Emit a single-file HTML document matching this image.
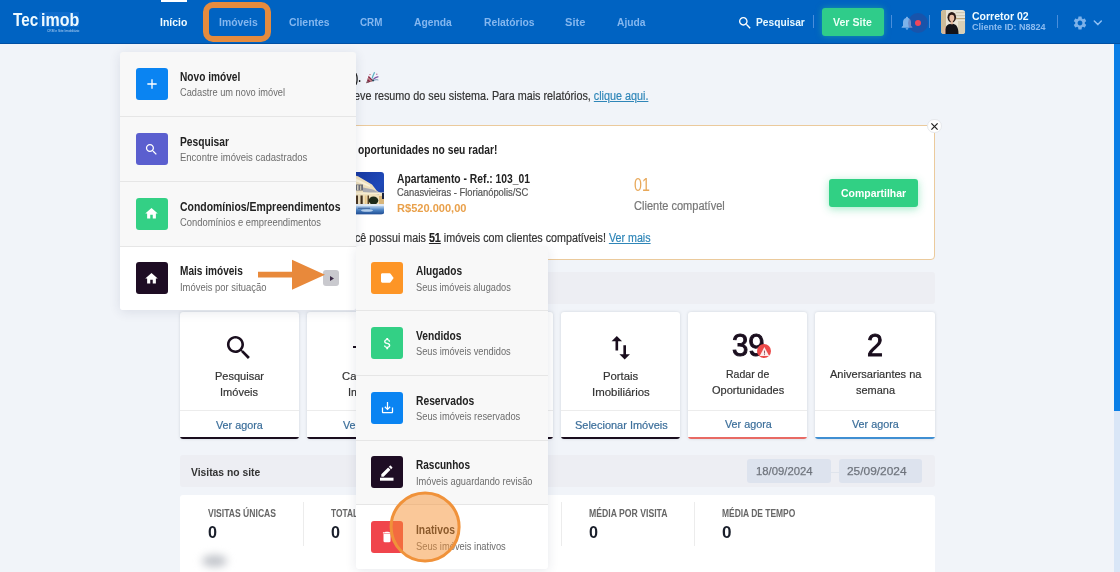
<!DOCTYPE html>
<html lang="pt-BR"><head><meta charset="utf-8"><title>Tecimob</title>
<style>
*{box-sizing:border-box;margin:0;padding:0}
html,body{width:1120px;height:572px;overflow:hidden}
body{background:#f1f4f9;font-family:"Liberation Sans",sans-serif;position:relative}
.abs,.t,.box{position:absolute}
.t{white-space:nowrap;line-height:1;transform-origin:0 0;display:block}
.layer{position:absolute;left:0;top:0;width:1120px;height:572px;pointer-events:none}
svg{position:absolute;display:block;overflow:visible}
/* nav */
#nav{left:0;top:0;width:1120px;height:44px;background:#0063c2;box-shadow:inset 0 -1px 0 rgba(0,35,95,.3)}
.vsep{width:1px;height:13px;top:15px;background:#4a8edb}
/* cards */
.card{background:#fff;border-radius:3px;top:312px;height:126.5px;width:119.5px;box-shadow:0 0 3px rgba(50,55,70,.17);overflow:hidden}
.card i{position:absolute;left:0;right:0;top:97.6px;height:1px;background:#ececec}
.card b{position:absolute;left:0;right:0;bottom:0;height:1.8px;background:#1a0e1e}
.bar{background:#edeef3;border-radius:3px}
/* menus */
.mi{position:absolute;left:0;width:100%;height:64.5px;border-top:1px solid #e6e6e6}
.ic{position:absolute;width:32px;height:32px;border-radius:3px}
.bm{display:inline-block;width:0;height:0;vertical-align:baseline}

.rw{-webkit-text-stroke:.22px}

</style></head>
<body>
<!-- ================= BASE PAGE ================= -->
<div class="layer" id="L-base">
  <!-- radar card -->
  <div class="box" style="left:180px;top:125px;width:755px;height:134.6px;background:#fff;border:1px solid #ebca9c;border-radius:4px"></div>
  <!-- thumbnail -->
  <svg style="left:355.3px;top:171.6px" width="29" height="42.4" viewBox="0 0 29 42.4">
    <defs><clipPath id="tc"><rect x="-4" width="33" height="42.4" rx="3"/></clipPath>
    <linearGradient id="sky" x1="0" y1="0" x2="1" y2="1"><stop offset="0" stop-color="#17379f"/><stop offset=".6" stop-color="#1f49b8"/><stop offset="1" stop-color="#16307c"/></linearGradient>
    <linearGradient id="pool" x1="0" y1="0" x2="0" y2="1"><stop offset="0" stop-color="#b9d3ee"/><stop offset=".45" stop-color="#4f86c6"/><stop offset="1" stop-color="#1d4c92"/></linearGradient></defs>
    <g clip-path="url(#tc)"><rect x="-4" width="33" height="42.4" fill="url(#sky)"/>
    <polygon points="0,3.5 3,4.2 17,12.5 22,19 29,23 29,32.500 0,32.500" fill="#efe0bd"/>
    <polygon points="0,6 15,13.5 15,15 0,9" fill="#fbf3dc"/>
    <rect x="0" y="12.500" width="8" height="6" fill="#6d6f78"/><rect x="2" y="13.200" width="1.5" height="5" fill="#d9d3c0"/><rect x="5" y="13.500" width="1.200" height="4.500" fill="#c9c3b0"/>
    <polygon points="8,15.500 18,17.500 24,20.500 24,22.500 8,20" fill="#a9aab0"/>
    <rect x="0" y="20.500" width="29" height="1.600" fill="#f7edd2"/>
    <rect x="0" y="23.500" width="3" height="8.500" fill="#4a3520"/><rect x="5.500" y="23.500" width="2.200" height="8.500" fill="#3e2c1a"/><rect x="9.800" y="23.500" width="1.800" height="8.500" fill="#e9c98a"/><rect x="12.500" y="23.500" width="1.500" height="8.500" fill="#5a4326"/>
    <ellipse cx="18.500" cy="28.500" rx="4.800" ry="4" fill="#1c2a1a"/><rect x="24" y="24" width="5" height="8" fill="#d9b67a"/><rect x="27" y="21" width="2" height="6" fill="#1b2440"/>
    <rect x="0" y="32" width="29" height="2.200" fill="#dfe9f4"/>
    <rect x="0" y="34" width="29" height="8.400" fill="url(#pool)"/><ellipse cx="12" cy="38.500" rx="6" ry="1.300" fill="#cfe2f6" opacity=".8"/><rect x="3" y="35.800" width="12" height=".9" fill="#1e3f78" opacity=".7"/></g>
  </svg>
  <!-- compartilhar button -->
  <div class="box" style="left:829px;top:178.8px;width:89px;height:28px;background:#31d084;border-radius:3px;box-shadow:0 2px 8px rgba(49,208,132,.45)"></div>
  <!-- close btn -->
  <div class="box" style="left:927.1px;top:118.9px;width:14.600px;height:14.600px;border-radius:50%;background:#fff;border:1px solid #e6e8ec"></div>
  <svg style="left:930.9px;top:122.7px" width="7" height="7" viewBox="0 0 7 7"><path d="M0.400 0.400 L6.600 6.600 M6.600 0.400 L0.400 6.600" stroke="#222" stroke-width="1.250" fill="none"/></svg>
  <!-- emoji -->
  <svg style="left:365.5px;top:72px" width="13" height="11.600" viewBox="0 0 13 11.600">
    <polygon points="0.3,11.300 2.600,3.800 7.600,8.700" fill="#8c2444"/><polygon points="0.300,11.300 1.200,8.400 3.200,10.300" fill="#7b6a6c"/><polygon points="1.700,6.800 2.200,5.200 6.200,9.100 4.700,9.700" fill="#b88a8a"/>
    <path d="M6.200 6.500 C6.500 4 7.800 2 8.600 0.300" stroke="#5fb2c4" stroke-width="1.300" fill="none"/><path d="M7.500 7.200 C9 5.500 10.500 5 12.400 4.600" stroke="#7d55a6" stroke-width="1.200" fill="none"/><path d="M8 8.300 C9.500 7.600 11 7.600 12.300 8" stroke="#6b8fb8" stroke-width="1" fill="none"/>
    <circle cx="4" cy="2.600" r=".7" fill="#c0486a"/><circle cx="10.800" cy="2.300" r=".7" fill="#b86a9a"/><rect x="6.200" y="7.500" width="1.800" height="1.800" fill="#284c5c"/></svg>

  <!-- gray section bar -->
  <div class="box bar" style="left:179.5px;top:272px;width:755.5px;height:31.5px"></div>

  <!-- cards -->
  <div class="box card" style="left:179.5px"><i></i><b></b></div>
  <div class="box card" style="left:306.6px"><i></i><b></b></div>
  <div class="box card" style="left:433.7px"><i></i><b></b></div>
  <div class="box card" style="left:560.8px"><i></i><b></b></div>
  <div class="box card" style="left:687.9px"><i></i><b style="background:#e86a64"></b></div>
  <div class="box card" style="left:815px"><i></i><b style="background:#3f8fd2"></b></div>
  <!-- card icons -->
  <svg style="left:223.1px;top:332.3px" width="31.5" height="31.5" viewBox="0 0 24 24"><path fill="#1a0e1e" d="M15.5 14h-.79l-.28-.27C15.41 12.59 16 11.11 16 9.5 16 5.91 13.09 3 9.5 3S3 5.91 3 9.5 5.91 16 9.5 16c1.61 0 3.09-.59 4.23-1.57l.27.28v.79l5 4.99L20.49 19l-4.99-5zm-6 0C7.01 14 5 11.99 5 9.5S7.01 5 9.5 5 14 7.01 14 9.5 11.99 14 9.5 14z"/></svg>
  <div class="box" style="left:353.3px;top:345.9px;width:27px;height:2px;background:#1a0e1e"></div><div class="box" style="left:365.8px;top:333.4px;width:2px;height:27px;background:#1a0e1e"></div>
  <svg style="left:604.8px;top:332.3px" width="31.5" height="31.5" viewBox="0 0 24 24"><path fill="#1a0e1e" d="M16 17.01V10h-2v7.01h-3L15 21l4-3.99h-3zM9 3L5 6.99h3V14h2V6.99h3L9 3z"/></svg>

  <!-- visitas bar -->
  <div class="box bar" style="left:179.5px;top:455px;width:755.5px;height:32px"></div>
  <div class="box" style="left:830px;top:472px;width:9px;height:1px;background:#dfe4ec"></div>
  <div class="box" style="left:747px;top:459.2px;width:83.5px;height:24px;background:#dde3ee;border-radius:3px"></div>
  <div class="box" style="left:838.8px;top:459.2px;width:83.7px;height:24px;background:#dde3ee;border-radius:3px"></div>
  <!-- stats panel -->
  <div class="box" style="left:179.5px;top:495px;width:755.5px;height:90px;background:#fff;border-radius:3px"></div>
  <div class="box" style="left:303px;top:502px;width:1px;height:44px;background:#ececec"></div>
  <div class="box" style="left:432px;top:502px;width:1px;height:44px;background:#ececec"></div>
  <div class="box" style="left:561px;top:502px;width:1px;height:44px;background:#ececec"></div>
  <div class="box" style="left:694px;top:502px;width:1px;height:44px;background:#ececec"></div>
  <div class="box" style="left:202px;top:554.5px;width:25px;height:12px;border-radius:50%;background:#c0c3c9;filter:blur(4.5px)"></div>
<span class="t" style="left:354.50px;top:71.80px;font-size:12.5px;font-weight:700;color:#222;transform:scaleX(0.7853);">).</span>
<span class="t" style="left:354.10px;top:90.30px;font-size:12.5px;font-weight:400;color:#333;transform:scaleX(0.8629);-webkit-text-stroke:.2px;">eve resumo do seu sistema. Para mais relatórios, <span style="color:#2f86b8;text-decoration:underline">clique aqui.</span></span>
<span class="t" style="left:357.80px;top:143.60px;font-size:12px;font-weight:700;color:#222;transform:scaleX(0.8569);">oportunidades no seu radar!</span>
<span class="t" style="left:396.50px;top:172.90px;font-size:12px;font-weight:700;color:#222;transform:scaleX(0.8596);">Apartamento - Ref.: 103_01</span>
<span class="t" style="left:396.50px;top:188.40px;font-size:10px;font-weight:400;color:#555;transform:scaleX(0.9374);-webkit-text-stroke:.2px;">Canasvieiras - Florianópolis/SC</span>
<span class="t" style="left:396.50px;top:202.80px;font-size:10.8px;font-weight:700;color:#e9a04a;transform:scaleX(1.0244);">R$520.000,00</span>
<span class="t" style="left:633.90px;top:176.90px;font-size:17.5px;font-weight:400;color:#e8a859;transform:scaleX(0.8116);">01</span>
<span class="t" style="left:633.90px;top:200.30px;font-size:12.5px;font-weight:400;color:#777;transform:scaleX(0.8830);-webkit-text-stroke:.2px;">Cliente compatível</span>
<span class="t" style="left:841.10px;top:187.80px;font-size:11.5px;font-weight:700;color:#fff;transform:scaleX(0.9095);">Compartilhar</span>
<span class="t" style="left:354.90px;top:232.20px;font-size:12.5px;font-weight:400;color:#333;transform:scaleX(0.8578);-webkit-text-stroke:.2px;">cê possui mais <b style="color:#222;text-decoration:underline">51</b> imóveis com clientes compatíveis! <span style="color:#2f86b8;text-decoration:underline">Ver mais</span></span>
<span class="t" style="left:214.50px;top:370.50px;font-size:11.8px;font-weight:400;color:#333;transform:scaleX(0.9339);-webkit-text-stroke:.2px;">Pesquisar</span>
<span class="t" style="left:220.00px;top:386.50px;font-size:11.8px;font-weight:400;color:#333;transform:scaleX(0.9347);-webkit-text-stroke:.2px;">Imóveis</span>
<span class="t" style="left:215.75px;top:419.60px;font-size:11.3px;font-weight:400;color:#3b6e9a;transform:scaleX(0.9541);-webkit-text-stroke:.2px;">Ver agora</span>
<span class="t" style="left:342.00px;top:370.50px;font-size:11.8px;font-weight:400;color:#333;transform:scaleX(0.9557);-webkit-text-stroke:.2px;">Cadastrar</span>
<span class="t" style="left:348.00px;top:386.50px;font-size:11.8px;font-weight:400;color:#333;transform:scaleX(0.9347);-webkit-text-stroke:.2px;">Imóveis</span>
<span class="t" style="left:343.25px;top:419.60px;font-size:11.3px;font-weight:400;color:#3b6e9a;transform:scaleX(0.9541);-webkit-text-stroke:.2px;">Ver agora</span>
<span class="t" style="left:603.25px;top:370.50px;font-size:11.8px;font-weight:400;color:#333;transform:scaleX(0.9600);-webkit-text-stroke:.2px;">Portais</span>
<span class="t" style="left:592.00px;top:386.50px;font-size:11.8px;font-weight:400;color:#333;transform:scaleX(0.9678);-webkit-text-stroke:.2px;">Imobiliários</span>
<span class="t" style="left:574.50px;top:419.60px;font-size:11.3px;font-weight:400;color:#3b6e9a;transform:scaleX(0.9717);-webkit-text-stroke:.2px;">Selecionar Imóveis</span>
<span class="t" style="left:731.50px;top:329.50px;font-size:30.5px;font-weight:400;color:#1a0e1e;transform:scaleX(0.9650);-webkit-text-stroke:1px #1a0e1e;">39</span>
<span class="t" style="left:726.25px;top:369.00px;font-size:11.8px;font-weight:400;color:#333;transform:scaleX(0.8912);-webkit-text-stroke:.2px;">Radar de</span>
<span class="t" style="left:712.00px;top:385.25px;font-size:11.8px;font-weight:400;color:#333;transform:scaleX(0.9336);-webkit-text-stroke:.2px;">Oportunidades</span>
<span class="t" style="left:724.50px;top:419.20px;font-size:11.3px;font-weight:400;color:#3b6e9a;transform:scaleX(0.9541);-webkit-text-stroke:.2px;">Ver agora</span>
<span class="t" style="left:867.00px;top:329.50px;font-size:30.5px;font-weight:400;color:#1a0e1e;transform:scaleX(0.9429);-webkit-text-stroke:1px #1a0e1e;">2</span>
<span class="t" style="left:829.50px;top:369.00px;font-size:11.8px;font-weight:400;color:#333;transform:scaleX(0.9364);-webkit-text-stroke:.2px;">Aniversariantes na</span>
<span class="t" style="left:855.75px;top:385.25px;font-size:11.8px;font-weight:400;color:#333;transform:scaleX(0.9289);-webkit-text-stroke:.2px;">semana</span>
<span class="t" style="left:852.00px;top:419.20px;font-size:11.3px;font-weight:400;color:#3b6e9a;transform:scaleX(0.9541);-webkit-text-stroke:.2px;">Ver agora</span>
<span class="t" style="left:191.25px;top:465.50px;font-size:11.7px;font-weight:700;color:#333;transform:scaleX(0.8834);">Visitas no site</span>
<span class="t" style="left:755.75px;top:465.90px;font-size:11.5px;font-weight:400;color:#6f747d;transform:scaleX(0.9815);-webkit-text-stroke:.25px;">18/09/2024</span>
<span class="t" style="left:846.70px;top:465.90px;font-size:11.5px;font-weight:400;color:#6f747d;transform:scaleX(1.0345);-webkit-text-stroke:.25px;">25/09/2024</span>
<span class="t" style="left:207.50px;top:509.20px;font-size:10.2px;font-weight:700;color:#666;transform:scaleX(0.8419);">VISITAS ÚNICAS</span>
<span class="t" style="left:207.50px;top:525.40px;font-size:16px;font-weight:700;color:#1a1f2b;transform:scaleX(1.0105);">0</span>
<span class="t" style="left:331.25px;top:509.20px;font-size:10.2px;font-weight:700;color:#666;transform:scaleX(0.8223);">TOTAL DE VISITAS</span>
<span class="t" style="left:331.25px;top:525.40px;font-size:16px;font-weight:700;color:#1a1f2b;transform:scaleX(1.0105);">0</span>
<span class="t" style="left:589.00px;top:509.20px;font-size:10.2px;font-weight:700;color:#666;transform:scaleX(0.8508);">MÉDIA POR VISITA</span>
<span class="t" style="left:589.00px;top:525.40px;font-size:16px;font-weight:700;color:#1a1f2b;transform:scaleX(1.0105);">0</span>
<span class="t" style="left:721.50px;top:509.20px;font-size:10.2px;font-weight:700;color:#666;transform:scaleX(0.8278);">MÉDIA DE TEMPO</span>
<span class="t" style="left:721.50px;top:525.40px;font-size:16px;font-weight:700;color:#1a1f2b;transform:scaleX(1.0667);">0</span>
  <!-- warning badge -->
  <div class="box" style="left:756.9px;top:344.2px;width:14.2px;height:14.2px;border-radius:50%;background:#ec4a4a"></div>
  <svg style="left:759px;top:346px" width="11" height="11" viewBox="759 346 11 11"><polygon points="764.400,346.900 769.200,356 759.700,356" fill="#fdecec"/><rect x="764" y="350.600" width=".9" height="3" fill="#8a4a55"/><rect x="764" y="354.200" width=".9" height=".9" fill="#8a4a55"/></svg>
</div>

<!-- scrollbar -->
<div class="box" style="left:1114px;top:44px;width:6px;height:528px;background:#d9e6f7"></div>
<div class="box" style="left:1114px;top:44px;width:6px;height:367px;background:#0a7ee6"></div>

<!-- ================= NAV ================= -->
<div class="layer" id="L-nav">
  <div class="box" id="nav"></div>
  <div class="box" style="left:160.5px;top:0;width:26.5px;height:2px;background:#fff"></div>
  <div class="box" style="left:38.6px;top:11.8px;width:40.8px;height:15px;background:#0f6ccb"></div>
  <!-- search -->
  <svg style="left:737.3px;top:14.8px" width="16" height="16" viewBox="0 0 24 24"><path fill="#fff" d="M15.5 14h-.79l-.28-.27C15.41 12.59 16 11.11 16 9.5 16 5.91 13.09 3 9.5 3S3 5.91 3 9.5 5.91 16 9.5 16c1.61 0 3.09-.59 4.23-1.57l.27.28v.79l5 4.99L20.49 19l-4.99-5zm-6 0C7.01 14 5 11.99 5 9.5S7.01 5 9.5 5 14 7.01 14 9.5 11.99 14 9.5 14z"/></svg>
  <div class="box vsep" style="left:812.5px"></div>
  <div class="box" style="left:821.5px;top:8px;width:62.5px;height:27.5px;background:#2fcc8a;border-radius:3px;box-shadow:0 0 6px rgba(47,204,138,.5)"></div>
  <div class="box vsep" style="left:891px"></div>
  <!-- bell -->
  <svg style="left:898.7px;top:14.5px" width="16" height="16" viewBox="0 0 24 24"><path fill="#7db2ea" d="M12 22c1.1 0 2-.9 2-2h-4c0 1.1.89 2 2 2zm6-6v-5c0-3.07-1.64-5.64-4.5-6.32V4c0-.83-.67-1.5-1.5-1.5s-1.5.67-1.5 1.5v.68C7.63 5.36 6 7.92 6 11v5l-2 2v1h16v-1l-2-2z"/></svg>
  <div class="box" style="left:908.3px;top:13.4px;width:20px;height:20px;border-radius:50%;background:rgba(80,50,120,.3)"></div>
  <div class="box" style="left:915.1px;top:20.3px;width:6.200px;height:6.200px;border-radius:50%;background:#f0465a"></div>
  <div class="box vsep" style="left:929px"></div>
  <!-- avatar -->
  <svg style="left:940.6px;top:9.800px" width="24.200" height="24" viewBox="0 0 24.200 24"><defs><clipPath id="ac"><rect width="24.200" height="24" rx="3"/></clipPath></defs>
    <g clip-path="url(#ac)"><rect width="24.200" height="24" fill="#e9e4d6"/><rect x="0" y="0" width="5" height="24" fill="#cdbb98"/><rect x="15" y="2" width="9.200" height="1.200" fill="#cfc8b4"/><rect x="15" y="5" width="9.200" height="1.200" fill="#cfc8b4"/><rect x="15" y="8" width="9.200" height="1.200" fill="#b9a57c"/><rect x="17" y="11" width="7.200" height="13" fill="#d8cfb6"/>
    <path d="M3.500 24 C3.500 16.500 6.500 13.800 10.500 13.800 C14.500 13.800 17.500 16 17.500 24Z" fill="#131318"/><ellipse cx="10.800" cy="7.200" rx="4.300" ry="5.200" fill="#2a1a16"/><ellipse cx="10.800" cy="8" rx="2.500" ry="3.200" fill="#e9bfa6"/><rect x="9.700" y="10.500" width="2.200" height="3.800" fill="#e2b59a"/><rect x="2.500" y="17" width="2" height="7" fill="#e2b59a"/></g></svg>
  <div class="box vsep" style="left:1056.5px"></div>
  <!-- gear -->
  <svg style="left:1072.1px;top:15.3px" width="16" height="16" viewBox="0 0 24 24"><path fill="#7db2ea" d="M19.14 12.94c.04-.3.06-.61.06-.94 0-.32-.02-.64-.07-.94l2.03-1.58c.18-.14.23-.41.12-.61l-1.92-3.32c-.12-.22-.37-.29-.59-.22l-2.39.96c-.5-.38-1.03-.7-1.62-.94l-.36-2.54c-.04-.24-.24-.41-.48-.41h-3.84c-.24 0-.43.17-.47.41l-.36 2.54c-.59.24-1.13.57-1.62.94l-2.39-.96c-.22-.08-.47 0-.59.22L2.74 8.87c-.12.21-.08.47.12.61l2.03 1.58c-.05.3-.09.63-.09.94s.02.64.07.94l-2.03 1.58c-.18.14-.23.41-.12.61l1.92 3.32c.12.22.37.29.59.22l2.39-.96c.5.38 1.03.7 1.62.94l.36 2.54c.05.24.24.41.48.41h3.84c.24 0 .44-.17.47-.41l.36-2.54c.59-.24 1.13-.56 1.62-.94l2.39.96c.22.08.47 0 .59-.22l1.92-3.32c.12-.22.07-.47-.12-.61l-2.01-1.58zM12 15.6c-1.98 0-3.6-1.62-3.6-3.6s1.620-3.6 3.6-3.600 3.600 1.620 3.600 3.600-1.620 3.600-3.600 3.600z"/></svg>
  <svg style="left:1093px;top:19px" width="10" height="8" viewBox="0 0 10 8"><path d="M1.300 2 L4.800 5.600 L8.300 2" stroke="#8fc0f4" stroke-width="1.500" fill="none" stroke-linecap="round" stroke-linejoin="round"/></svg>
<span class="t" style="left:12.50px;top:10.75px;font-size:18px;font-weight:700;color:#eefaff;transform:scaleX(0.8488);">Tec</span>
<span class="t" style="left:40.50px;top:10.75px;font-size:18px;font-weight:700;color:#eefaff;transform:scaleX(0.8884);">imob</span>
<span class="t" style="left:47.10px;top:29.90px;font-size:3.4px;font-weight:400;color:#b9d6f5;transform:scaleX(0.9604);">CRM e Site Imobiliário</span>
<span class="t" style="left:160.00px;top:17.30px;font-size:11.5px;font-weight:700;color:#effbff;transform:scaleX(0.9074);">Início</span>
<span class="t" style="left:218.50px;top:17.30px;font-size:11.5px;font-weight:700;color:#84b7ef;transform:scaleX(0.9048);">Imóveis</span>
<span class="t" style="left:288.50px;top:17.30px;font-size:11.5px;font-weight:700;color:#84b7ef;transform:scaleX(0.9073);">Clientes</span>
<span class="t" style="left:360.20px;top:17.30px;font-size:11.5px;font-weight:700;color:#84b7ef;transform:scaleX(0.8549);">CRM</span>
<span class="t" style="left:414.10px;top:17.30px;font-size:11.5px;font-weight:700;color:#84b7ef;transform:scaleX(0.8963);">Agenda</span>
<span class="t" style="left:483.50px;top:17.30px;font-size:11.5px;font-weight:700;color:#84b7ef;transform:scaleX(0.8996);">Relatórios</span>
<span class="t" style="left:565.20px;top:17.30px;font-size:11.5px;font-weight:700;color:#84b7ef;transform:scaleX(0.9624);">Site</span>
<span class="t" style="left:617.00px;top:17.30px;font-size:11.5px;font-weight:700;color:#84b7ef;transform:scaleX(0.8919);">Ajuda</span>
<span class="t" style="left:756.30px;top:17.30px;font-size:11.5px;font-weight:700;color:#e6f8ff;transform:scaleX(0.8875);">Pesquisar</span>
<span class="t" style="left:833.10px;top:16.80px;font-size:11.5px;font-weight:700;color:#ecfff6;transform:scaleX(0.9194);">Ver Site</span>
<span class="t" style="left:972.00px;top:11.40px;font-size:11.5px;font-weight:700;color:#effbff;transform:scaleX(0.9145);">Corretor 02</span>
<span class="t" style="left:972.00px;top:23.20px;font-size:9px;font-weight:700;color:#8cbcf0;transform:scaleX(0.9996);">Cliente ID: N8824</span>
  <!-- orange highlight -->
  <div class="box" style="left:203px;top:2.1px;width:68px;height:39.6px;border:6px solid #e58b3e;border-radius:10px"></div>
</div>

<!-- ================= LEFT MENU ================= -->
<div class="layer" id="L-menu">
  <div class="box" style="left:120px;top:52px;width:235.5px;height:258.3px;background:#f8f8f8;border-radius:3px;box-shadow:0 2px 12px rgba(40,50,80,.11)">
    <div class="mi" style="top:0;border-top:0"></div>
    <div class="mi" style="top:64.3px"></div>
    <div class="mi" style="top:129px"></div>
    <div class="mi" style="top:193.8px;background:#fff;border-radius:0 0 3px 3px"></div>
  </div>
  <div class="ic" style="left:135.8px;top:68px;background:#0a84f2"></div>
  <svg style="left:143.8px;top:76px" width="16" height="16" viewBox="0 0 24 24"><path fill="#fff" d="M19 13h-6v6h-2v-6H5v-2h6V5h2v6h6v2z"/></svg>
  <div class="ic" style="left:135.8px;top:133px;background:#5b5fcf"></div>
  <svg style="left:144.3px;top:141.500px" width="15" height="15" viewBox="0 0 24 24"><path fill="#fff" d="M15.5 14h-.79l-.28-.27C15.41 12.59 16 11.11 16 9.5 16 5.91 13.09 3 9.5 3S3 5.91 3 9.5 5.91 16 9.5 16c1.61 0 3.09-.59 4.23-1.57l.27.28v.79l5 4.99L20.49 19l-4.99-5zm-6 0C7.01 14 5 11.99 5 9.5S7.01 5 9.5 5 14 7.01 14 9.5 11.99 14 9.5 14z"/></svg>
  <div class="ic" style="left:135.8px;top:197.5px;background:#33d085"></div>
  <svg style="left:144.3px;top:206px" width="15" height="15" viewBox="0 0 24 24"><path fill="#fff" d="M10 20v-6h4v6h5v-8h3L12 3 2 12h3v8z"/></svg>
  <div class="ic" style="left:135.8px;top:262.2px;background:#1e0d24"></div>
  <svg style="left:144.3px;top:270.700px" width="15" height="15" viewBox="0 0 24 24"><path fill="#fff" d="M10 20v-6h4v6h5v-8h3L12 3 2 12h3v8z"/></svg>
  <!-- small badge -->
  <div class="box" style="left:323.3px;top:270.2px;width:15.8px;height:15.8px;border-radius:3px;background:#c9c9ce"></div>
  <svg style="left:330px;top:275.8px" width="4" height="5" viewBox="0 0 4 5"><polygon points="0,0 4,2.5 0,5" fill="#3a2a45"/></svg>
<span class="t" style="left:179.50px;top:70.75px;font-size:12px;font-weight:700;color:#222;transform:scaleX(0.8443);">Novo imóvel</span>
<span class="t" style="left:179.50px;top:88.30px;font-size:10px;font-weight:400;color:#6d6d6d;transform:scaleX(0.9260);">Cadastre um novo imóvel</span>
<span class="t" style="left:179.50px;top:135.75px;font-size:12px;font-weight:700;color:#222;transform:scaleX(0.8540);">Pesquisar</span>
<span class="t" style="left:179.50px;top:153.10px;font-size:10px;font-weight:400;color:#6d6d6d;transform:scaleX(0.9498);">Encontre imóveis cadastrados</span>
<span class="t" style="left:179.50px;top:200.50px;font-size:12px;font-weight:700;color:#222;transform:scaleX(0.8690);">Condomínios/Empreendimentos</span>
<span class="t" style="left:179.50px;top:217.80px;font-size:10px;font-weight:400;color:#6d6d6d;transform:scaleX(0.9394);">Condomínios e empreendimentos</span>
<span class="t" style="left:179.50px;top:265.25px;font-size:12px;font-weight:700;color:#222;transform:scaleX(0.8400);">Mais imóveis</span>
<span class="t" style="left:179.50px;top:282.50px;font-size:10px;font-weight:400;color:#6d6d6d;transform:scaleX(0.9431);">Imóveis por situação</span>
</div>

<!-- ================= SUB MENU ================= -->
<div class="layer" id="L-sub">
  <div class="box" style="left:355.5px;top:246px;width:192.5px;height:323px;background:#f8f8f8;border-radius:3px;box-shadow:0 2px 12px rgba(40,50,80,.11)">
    <div class="mi" style="top:0;border-top:0"></div>
    <div class="mi" style="top:64px"></div>
    <div class="mi" style="top:129px"></div>
    <div class="mi" style="top:193.700px"></div>
    <div class="mi" style="top:257.500px;background:#fff;height:65.500px;border-radius:0 0 3px 3px"></div>
  </div>
  <div class="ic" style="left:371.2px;top:262.2px;background:#fd9526"></div>
  <svg style="left:379.2px;top:270.2px" width="16" height="16" viewBox="0 0 24 24"><path fill="#fff" d="M17.63 5.84C17.27 5.33 16.67 5 16 5L5 5.01C3.9 5.01 3 5.9 3 7v10c0 1.1.9 1.990 2 1.990L16 19c.67 0 1.27-.33 1.630-.84L22 12l-4.370-6.160z"/></svg>
  <div class="ic" style="left:371.2px;top:327px;background:#33d085"></div>
  <svg style="left:379.7px;top:335.500px" width="15" height="15" viewBox="0 0 24 24"><path fill="#fff" d="M11.8 10.9c-2.27-.59-3-1.2-3-2.15 0-1.09 1.01-1.85 2.7-1.85 1.78 0 2.44.85 2.5 2.1h2.21c-.07-1.72-1.12-3.3-3.21-3.81V3h-3v2.160c-1.940.42-3.500 1.680-3.500 3.610 0 2.310 1.910 3.460 4.700 4.130 2.500.6 3 1.480 3 2.410 0 .69-.49 1.790-2.700 1.790-2.060 0-2.870-.92-2.980-2.100h-2.200c.12 2.190 1.760 3.420 3.680 3.830V21h3v-2.150c1.950-.37 3.500-1.500 3.500-3.550 0-2.840-2.430-3.810-4.700-4.400z"/></svg>
  <div class="ic" style="left:371.2px;top:391.700px;background:#0a84f2"></div>
  <svg style="left:379.7px;top:400.200px" width="15" height="15" viewBox="0 0 24 24"><path fill="#fff" d="M19 12v7H5v-7H3v7c0 1.1.9 2 2 2h14c1.1 0 2-.9 2-2v-7h-2zm-6 .67l2.590-2.580L17 11.500l-5 5-5-5 1.410-1.410L11 12.670V3h2z"/></svg>
  <div class="ic" style="left:371.2px;top:456.200px;background:#1e0d24"></div>
  <svg style="left:380.4px;top:465px" width="13.500" height="16" viewBox="0 0 13.500 16"><g transform="translate(-0.560,-1.360) scale(0.620)"><path fill="#fff" d="M3 17.250V21h3.750L17.810 9.940l-3.750-3.750L3 17.250zM20.710 7.040c.39-.39.39-1.020 0-1.410l-2.340-2.340c-.39-.39-1.020-.39-1.410 0l-1.830 1.830 3.750 3.750 1.830-1.830z"/></g><rect x="0" y="12.700" width="13.500" height="3" fill="#fff"/></svg>
  <div class="ic" style="left:371.2px;top:521px;background:#f0454c"></div>
  <svg style="left:380.2px;top:529.500px" width="14" height="14" viewBox="0 0 24 24"><path fill="#fff" d="M6 19c0 1.1.9 2 2 2h8c1.1 0 2-.9 2-2V7H6v12zM19 4h-3.500l-1-1h-5l-1 1H5v2h14V4z"/></svg>
<span class="t" style="left:415.75px;top:265.25px;font-size:12px;font-weight:700;color:#222;transform:scaleX(0.8414);">Alugados</span>
<span class="t" style="left:415.75px;top:282.50px;font-size:10px;font-weight:400;color:#6d6d6d;transform:scaleX(0.9213);">Seus imóveis alugados</span>
<span class="t" style="left:415.75px;top:329.75px;font-size:12px;font-weight:700;color:#222;transform:scaleX(0.8530);">Vendidos</span>
<span class="t" style="left:415.75px;top:347.20px;font-size:10px;font-weight:400;color:#6d6d6d;transform:scaleX(0.9264);">Seus imóveis vendidos</span>
<span class="t" style="left:415.75px;top:394.50px;font-size:12px;font-weight:700;color:#222;transform:scaleX(0.8560);">Reservados</span>
<span class="t" style="left:415.75px;top:412.00px;font-size:10px;font-weight:400;color:#6d6d6d;transform:scaleX(0.9331);">Seus imóveis reservados</span>
<span class="t" style="left:415.75px;top:459.00px;font-size:12px;font-weight:700;color:#222;transform:scaleX(0.8348);">Rascunhos</span>
<span class="t" style="left:415.75px;top:476.60px;font-size:10px;font-weight:400;color:#6d6d6d;transform:scaleX(0.9272);">Imóveis aguardando revisão</span>
<span class="t" style="left:415.75px;top:524.00px;font-size:12px;font-weight:700;color:#222;transform:scaleX(0.8598);">Inativos</span>
<span class="t" style="left:415.75px;top:541.50px;font-size:10px;font-weight:400;color:#6d6d6d;transform:scaleX(0.9334);">Seus imóveis inativos</span>
</div>

<!-- ================= ANNOTATIONS ================= -->
<svg style="left:0;top:0" width="1120" height="572" viewBox="0 0 1120 572">
  <path d="M258 271.800H292V259.800L325 274.800 292 289.800V277.400H258Z" fill="#e8893b"/>
  <circle cx="425.100" cy="526.900" r="34" fill="rgba(246,146,52,.5)" stroke="#f0923a" stroke-width="3"/>
</svg>

</body></html>
